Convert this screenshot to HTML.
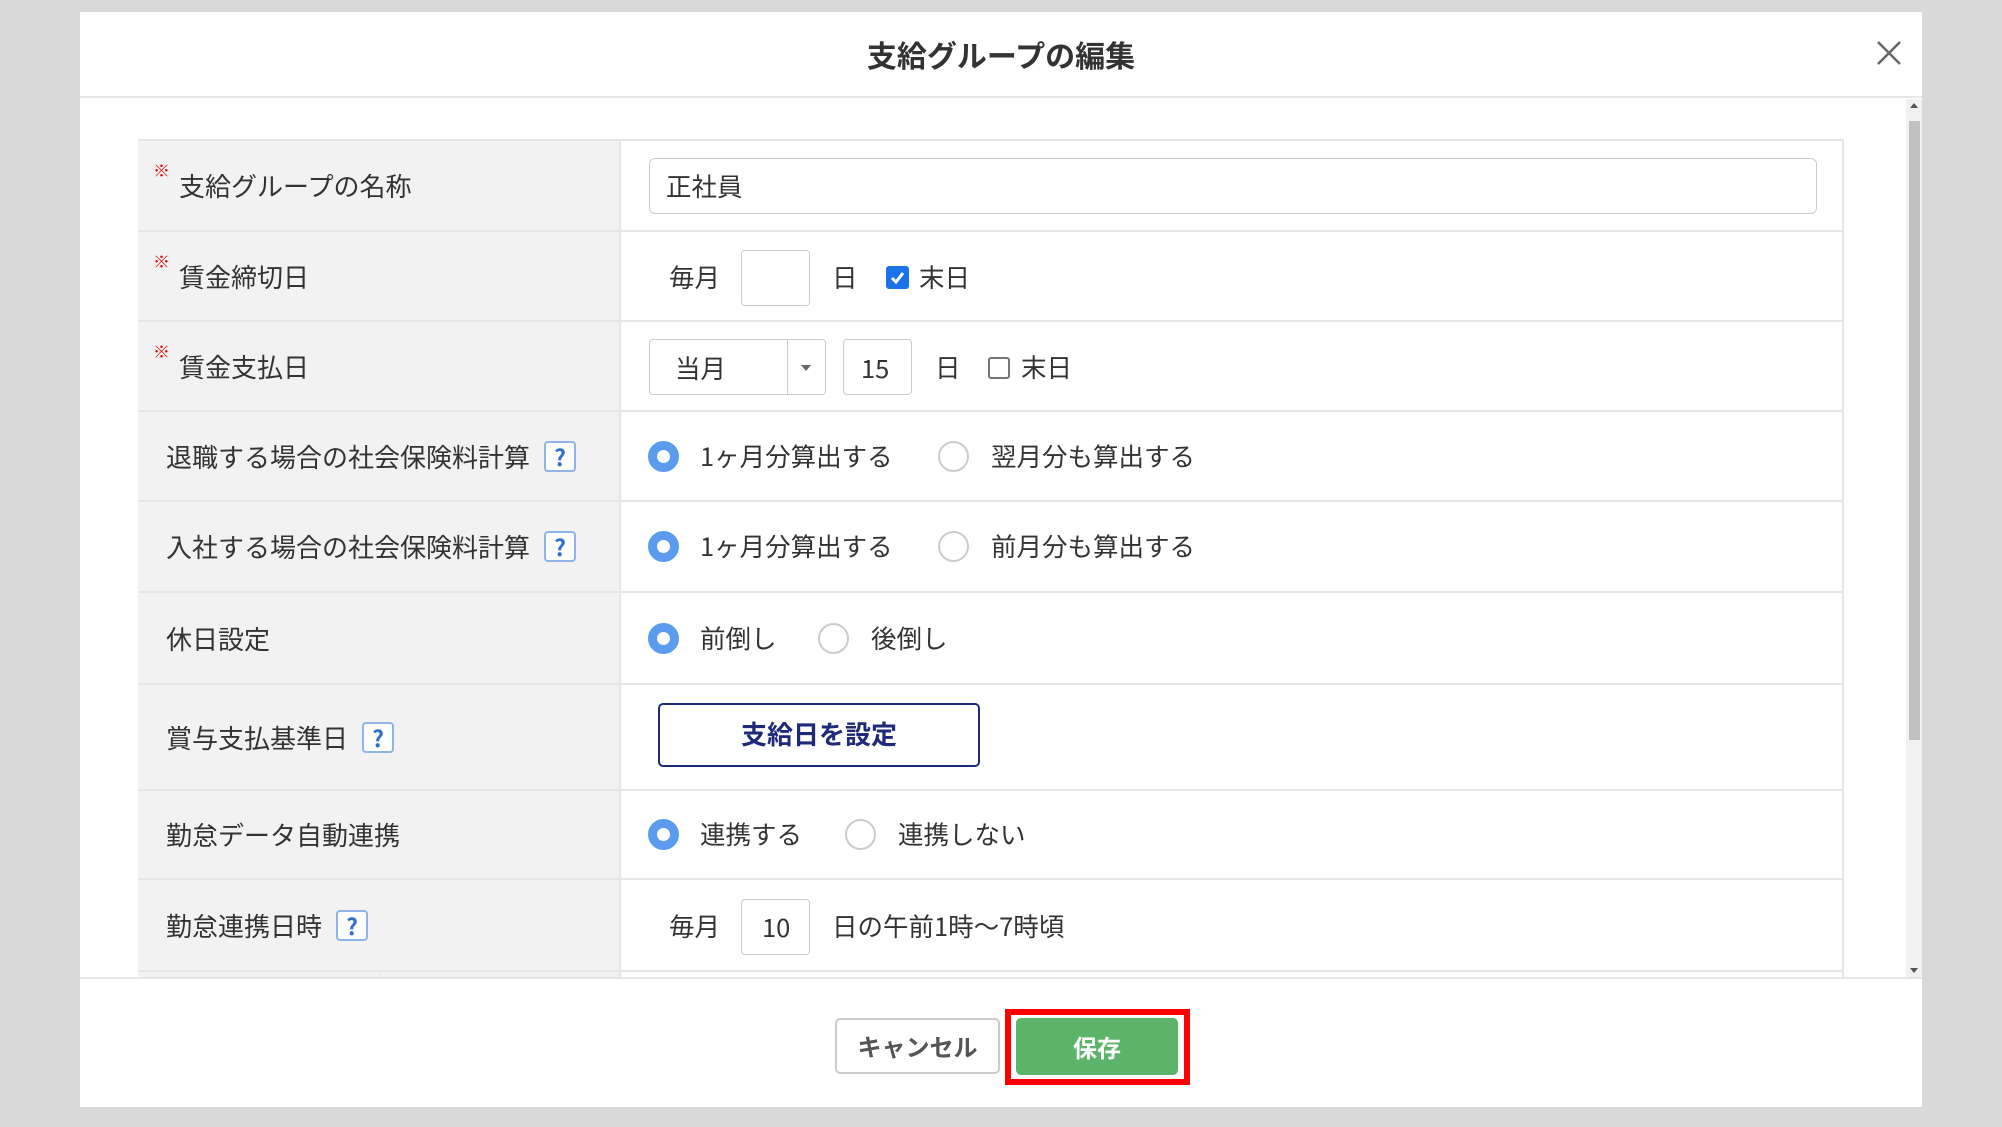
<!DOCTYPE html>
<html><head><meta charset="utf-8"><style>
*{box-sizing:border-box;margin:0;padding:0}
body{width:2002px;height:1127px;background:#d9d9d9;font-family:"Noto Sans CJK JP","Liberation Sans",sans-serif;color:#333;position:relative;overflow:hidden}
.modal{position:absolute;left:80px;top:12px;width:1842px;height:1095px;background:#fff}
.hdr{position:absolute;left:0;top:0;width:100%;height:86px;border-bottom:2px solid #e6e6e6;text-align:center;line-height:84px;font-size:30px;font-weight:bold;color:#333}
.x{position:absolute;left:1794px;top:26px;width:30px;height:30px}
.body{position:absolute;left:0;top:87px;width:1826px;height:878px;overflow:hidden}
.sb{position:absolute;left:1826px;top:87px;width:16px;height:878px;background:#f1f1f1}
.thumb{position:absolute;left:3px;top:22px;width:11px;height:619px;background:#c1c1c1}
.row{position:absolute;left:58px;width:1706px;border-top:2px solid #e6e6e6;display:flex}
.lab{width:483px;background:#f2f2f2;border-right:2px solid #e6e6e6;height:100%;position:relative;font-size:26px;display:flex;align-items:center;padding-left:28px}
.lab.req{padding-left:41px}
.lab.req::before{content:"※";position:absolute;left:15px;top:16px;color:#e60000;font-size:17px}
.val{flex:1;position:relative;height:100%;font-size:25.5px;line-height:36px}
.a{position:absolute}
.inp{position:absolute;border:1px solid #ccc;border-radius:4px;background:#fff}
.cb{position:absolute;width:23px;height:23px;border:2px solid #767676;border-radius:3px;background:#fff}
.cb.on{background:#1a73e8;border-color:#1a73e8}
.rd{position:absolute;width:31px;height:31px;border-radius:50%;border:2px solid #ccc;background:#fff}
.rd.on{border:9px solid #5b9cef}
.help{display:inline-block;width:32px;height:31px;border:2px solid #8fb4e6;border-radius:4px;color:#2f6fcf;font-size:23px;font-weight:bold;text-align:center;line-height:27px;margin-left:14px;background:#fff}
</style></head><body>
<div class="modal">
<div class="hdr">支給グループの編集</div>
<svg class="x" viewBox="0 0 30 30"><path d="M4 4L26 26M26 4L4 26" stroke="#666" stroke-width="2.5"/></svg>
<div class="body">
 <div style="position:absolute;left:58px;top:40px;width:1706px;height:860px;border:2px solid #e6e6e6;border-bottom:none"></div>
 <div class="row" style="top:40px;height:91px"><div class="lab req">支給グループの名称</div><div class="val">
  <div class="inp" style="left:28px;top:17px;width:1168px;height:56px;border-radius:6px"></div><div class="a" style="left:45px;top:27px">正社員</div></div></div>
 <div class="row" style="top:131px;height:90px"><div class="lab req">賃金締切日</div><div class="val">
  <div class="a" style="left:48px;top:27px">毎月</div><div class="inp" style="left:120px;top:18px;width:69px;height:56px"></div>
  <div class="a" style="left:211px;top:27px">日</div>
  <div class="cb on" style="left:265px;top:34px"><svg width="19" height="19" viewBox="0 0 19 19" style="position:absolute;left:0;top:0"><path d="M4 10L8 14L15 5" stroke="#fff" stroke-width="3" fill="none"/></svg></div>
  <div class="a" style="left:298px;top:27px">末日</div></div></div>
 <div class="row" style="top:221px;height:90px"><div class="lab req">賃金支払日</div><div class="val">
  <div class="inp" style="left:28px;top:17px;width:177px;height:56px"></div><div class="a" style="left:166px;top:17px;width:1px;height:56px;background:#ccc"></div>
  <div class="a" style="left:54px;top:28px">当月</div><div class="a" style="left:180px;top:43px;border:5px solid transparent;border-top:6px solid #666"></div>
  <div class="inp" style="left:222px;top:17px;width:69px;height:56px"></div><div class="a" style="left:240px;top:28px">15</div>
  <div class="a" style="left:314px;top:27px">日</div>
  <div class="cb" style="left:367px;top:35px;width:22px;height:22px"></div><div class="a" style="left:400px;top:27px">末日</div></div></div>
 <div class="row" style="top:311px;height:90px"><div class="lab">退職する場合の社会保険料計算<span class="help">?</span></div><div class="val">
  <div class="rd on" style="left:27px;top:29px"></div><div class="a" style="left:79px;top:26px">1ヶ月分算出する</div>
  <div class="rd" style="left:317px;top:29px"></div><div class="a" style="left:370px;top:26px">翌月分も算出する</div></div></div>
 <div class="row" style="top:401px;height:91px"><div class="lab">入社する場合の社会保険料計算<span class="help">?</span></div><div class="val">
  <div class="rd on" style="left:27px;top:29px"></div><div class="a" style="left:79px;top:26px">1ヶ月分算出する</div>
  <div class="rd" style="left:317px;top:29px"></div><div class="a" style="left:370px;top:26px">前月分も算出する</div></div></div>
 <div class="row" style="top:492px;height:92px"><div class="lab">休日設定</div><div class="val">
  <div class="rd on" style="left:27px;top:30px"></div><div class="a" style="left:79px;top:27px">前倒し</div>
  <div class="rd" style="left:197px;top:30px"></div><div class="a" style="left:250px;top:27px">後倒し</div></div></div>
 <div class="row" style="top:584px;height:106px"><div class="lab">賞与支払基準日<span class="help">?</span></div><div class="val">
  <div class="a" style="left:37px;top:18px;width:322px;height:64px;border:2px solid #1f2a7a;border-radius:5px;text-align:center;line-height:58px;font-weight:bold;font-size:26px;color:#1f2a7a">支給日を設定</div></div></div>
 <div class="row" style="top:690px;height:89px"><div class="lab">勤怠データ自動連携</div><div class="val">
  <div class="rd on" style="left:27px;top:28px"></div><div class="a" style="left:79px;top:25px">連携する</div>
  <div class="rd" style="left:224px;top:28px"></div><div class="a" style="left:277px;top:25px">連携しない</div></div></div>
 <div class="row" style="top:779px;height:92px"><div class="lab">勤怠連携日時<span class="help">?</span></div><div class="val">
  <div class="a" style="left:48px;top:28px">毎月</div><div class="inp" style="left:120px;top:19px;width:69px;height:56px"></div><div class="a" style="left:141px;top:29px">10</div>
  <div class="a" style="left:211px;top:28px">日の午前1時～7時頃</div></div></div>
 <div class="row" style="top:871px;height:20px"><div class="lab" style="background:#f2f2f2"><div class="a" style="left:242px;top:0;width:1px;height:20px;background:#e6e6e6"></div></div><div class="val"></div></div>
</div>
<div class="sb"><div class="thumb"></div>
 <div class="a" style="left:4px;top:4px;border:4px solid transparent;border-bottom:5px solid #555;border-top:none"></div>
 <div class="a" style="left:4px;top:869px;border:4px solid transparent;border-top:5px solid #555;border-bottom:none"></div></div>
<div class="a" style="left:0;top:965px;width:1842px;height:2px;background:#e6e6e6"></div>
<div class="a" style="left:755px;top:1006px;width:165px;height:56px;border:2px solid #ccc;border-radius:5px;text-align:center;line-height:52px;font-size:24px;font-weight:bold;color:#555;background:#fff">キャンセル</div>
<div class="a" style="left:925px;top:997px;width:185px;height:76px;border:6px solid #f00"></div>
<div class="a" style="left:936px;top:1006px;width:162px;height:57px;background:#5cb46a;border-radius:5px;text-align:center;line-height:57px;font-size:24px;font-weight:bold;color:#fff">保存</div>
</div>
</body></html>
